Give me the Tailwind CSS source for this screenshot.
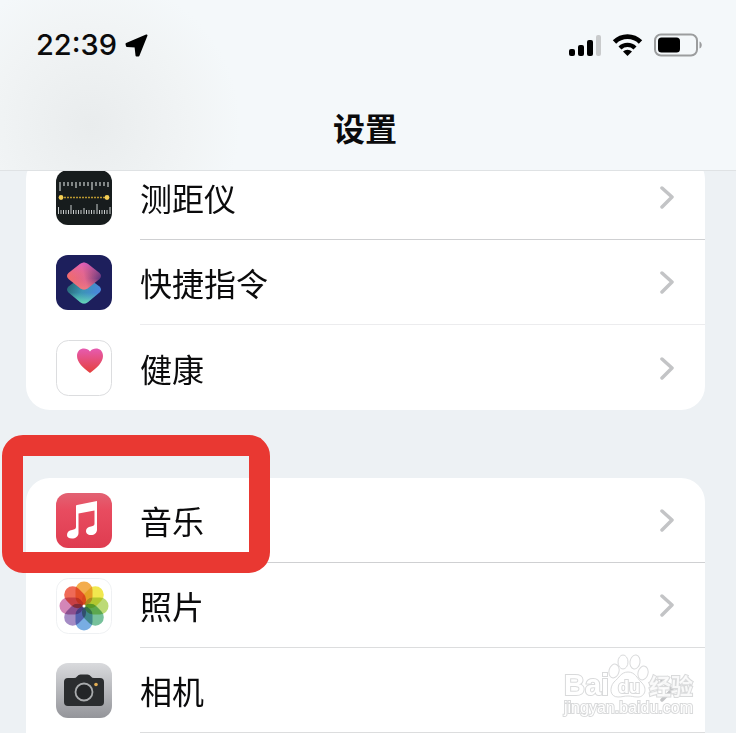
<!DOCTYPE html>
<html lang="zh-CN">
<head>
  <meta charset="UTF-8" />
  <meta name="viewport" content="width=device-width, initial-scale=1.0"/>
  <title>设置</title>
  <script src="https://cdn.jsdelivr.net/npm/@tailwindcss/browser@4"></script>
</head>

<body class="relative bg-[#edf1f4] min-h-screen overflow-x-hidden text-[#0b0b0c] font-['Noto_Sans_CJK_SC',sans-serif]">
  <!-- Header -->
  <header class="relative z-10 h-[171px] flex flex-col border-b border-[#dfe2e4] bg-[#f4f8fa] bg-[radial-gradient(circle_at_90px_125px,#e9eced_0px,#edf0f1_50px,#f1f4f5_100px,#f4f8fa_150px)]">
    <!-- Status bar -->
    <div class="h-[90px] flex items-center justify-between pl-9 pr-[34px]">
      <div class="flex items-center gap-2">
        <span class="text-[29px] font-medium font-['Inter',sans-serif]">22:39</span>
        <svg class="w-6 h-6" viewBox="0 0 24 24" fill="#000" stroke="#000" stroke-width="2" stroke-linejoin="round">
          <path d="M21.500 2.500 1.500 11 2 13 10.500 13.500 11.500 22.500 13.500 22.500Z"/>
        </svg>
      </div>
      <div class="flex items-center gap-[11px]">
        <!-- Signal -->
        <svg class="w-8 h-6" viewBox="0 0 32 24">
          <rect x="0" y="16" width="6" height="7" rx="2"/>
          <rect x="9" y="12" width="6" height="11" rx="2"/>
          <rect x="18" y="7" width="6" height="16" rx="2"/>
          <rect x="27" y="2" width="5" height="21" rx="2" fill="#c9cbcc"/>
        </svg>
        <!-- Wi-Fi -->
        <svg class="w-[31px] h-6" viewBox="0 0 31 24">
          <path d="M2.500 9a18.500 18.500 0 0 1 26 0" fill="none" stroke="#000" stroke-width="4.800"/>
          <path d="M8 15a10.700 10.700 0 0 1 15 0" fill="none" stroke="#000" stroke-width="4.300"/>
          <path d="M15.500 23 11 18.500a6.500 6.500 0 0 1 9 0Z"/>
        </svg>
        <!-- Battery -->
        <svg class="w-12 h-6" viewBox="0 0 48 24">
          <rect x="1" y="1.500" width="42" height="21" rx="6" fill="none" stroke="#9b9d9e" stroke-width="2"/>
          <rect x="4" y="4.500" width="22" height="15" rx="3.500"/>
          <path d="M45.500 8.500c3 1 3 6 0 7Z" fill="#9b9d9e"/>
        </svg>
      </div>
    </div>
    <h1 class="h-[74px] flex items-center justify-center pr-[6px] text-[32px] leading-10 font-bold">设置</h1>
  </header>

  <!-- Settings list -->
  <main class="-mt-4 ml-[26px] mr-[31px] space-y-[68px] text-[32px] leading-10">
    <section class="bg-white rounded-3xl">
      <a href="#" class="h-[85px] flex items-stretch gap-7 pl-[30px]">
        <!-- Measure -->
        <svg class="w-14 h-14 shrink-0 self-center" viewBox="0 0 56 56">
          <rect x="0" y="0" width="56" height="55" rx="12" fill="#171c1d"/>
          <path d="M4 12v9M8 12v4M12 12v4M16 12v4M20 12v6M24 12v4M28 12v4M32 12v4M36 12v8M40 12v4M44 12v4M48 12v4M52 12v5" stroke="#c9cdce" stroke-width="1.200"/>
          <path d="M5 27.500H51" stroke="#b99631" stroke-width="1.500" stroke-dasharray="2 1"/>
          <circle cx="5" cy="27.500" r="2.400" fill="#f4ce55"/>
          <circle cx="51" cy="27.500" r="2.400" fill="#f4ce55"/>
          <path d="M2.500 37v7M5 40v4M7.500 40v4M10 40v4M12.500 40v4M15 35v9M17.500 40v4M20 40v4M22.500 40v4M25 40v4M28 38v6M30.500 40v4M33 40v4M35.500 40v4M38 40v4M41 34v10M43.500 40v4M46 40v4M48.500 40v4M51 40v4M54 37v7" stroke="#c9cdce" stroke-width="1"/>
        </svg>
        <div class="flex-1 flex items-center justify-between pr-[30px] border-b border-[#cfd0d2]">
          <span>测距仪</span>
          <svg class="w-4 h-6" viewBox="0 0 16 24" fill="none" stroke="#c3c4c6" stroke-width="3.500" stroke-linecap="round" stroke-linejoin="round"><path d="M3 3 13 12 3 22"/></svg>
        </div>
      </a>
      <a href="#" class="h-[85px] flex items-stretch gap-7 pl-[30px]">
        <!-- Shortcuts -->
        <svg class="w-14 h-14 shrink-0 self-center" viewBox="0 0 56 56">
          <defs>
            <linearGradient id="scTop" x1="0" y1=".6" x2="1" y2=".4">
              <stop offset="0" stop-color="#f36b68"/>
              <stop offset=".5" stop-color="#e0668f"/>
              <stop offset="1" stop-color="#54307f"/>
            </linearGradient>
            <linearGradient id="scPink" x1=".5" y1="0" x2=".5" y2="1">
              <stop offset="0" stop-color="#e45bd2"/>
              <stop offset=".6" stop-color="#f0707a" stop-opacity="0"/>
              <stop offset="1" stop-color="#f3837c"/>
            </linearGradient>
            <linearGradient id="scBottom" x1="0" y1=".2" x2="1" y2=".6">
              <stop offset="0" stop-color="#24606c"/>
              <stop offset=".5" stop-color="#3c94b4"/>
              <stop offset="1" stop-color="#4b86e4"/>
            </linearGradient>
            <linearGradient id="scGreen" x1=".5" y1=".6" x2=".5" y2="1">
              <stop offset="0" stop-color="#5bd0b0" stop-opacity="0"/>
              <stop offset="1" stop-color="#68d8b4"/>
            </linearGradient>
          </defs>
          <rect x="0" y="0" width="56" height="55" rx="12" fill="#1d1f5c"/>
          <path d="M24.500 22.500Q28 20.500 31.500 22.500L43.500 31.500Q46.500 34.500 43.500 37.500L32 47Q28 50 24 47L12.500 37.500Q9.500 34.500 12.500 31.500Z" fill="url(#scBottom)"/>
          <path d="M24.500 22.500Q28 20.500 31.500 22.500L43.500 31.500Q46.500 34.500 43.500 37.500L32 47Q28 50 24 47L12.500 37.500Q9.500 34.500 12.500 31.500Z" fill="url(#scGreen)"/>
          <path d="M24 9Q28 6 32 9L43.500 18Q46.500 21 43.500 24L31.500 33.500Q28 35.500 24.500 33.500L12.500 24Q9.500 21 12.500 18Z" fill="url(#scTop)"/>
          <path d="M24 9Q28 6 32 9L43.500 18Q46.500 21 43.500 24L31.500 33.500Q28 35.500 24.500 33.500L12.500 24Q9.500 21 12.500 18Z" fill="url(#scPink)" opacity=".7"/>
        </svg>
        <div class="flex-1 flex items-center justify-between pr-[30px] border-b border-[#ececee]">
          <span>快捷指令</span>
          <svg class="w-4 h-6" viewBox="0 0 16 24" fill="none" stroke="#c3c4c6" stroke-width="3.500" stroke-linecap="round" stroke-linejoin="round"><path d="M3 3 13 12 3 22"/></svg>
        </div>
      </a>
      <a href="#" class="h-[85px] flex items-stretch gap-7 pl-[30px]">
        <!-- Health -->
        <svg class="w-14 h-14 shrink-0 self-center" viewBox="0 0 56 56">
          <defs>
            <linearGradient id="heart" x1="0" y1="0" x2="0" y2="1">
              <stop offset="0" stop-color="#e65bb0"/>
              <stop offset="1" stop-color="#e5403c"/>
            </linearGradient>
          </defs>
          <rect x=".5" y=".5" width="55" height="55" rx="12" fill="#fff" stroke="#dcdddf"/>
          <path d="M34 33C27 28 21 22 21 16C21 8 30 6.500 34 11.500C38 6.500 47 8 47 16C47 22 41 28 34 33Z" fill="url(#heart)"/>
        </svg>
        <div class="flex-1 flex items-center justify-between pr-[30px]">
          <span>健康</span>
          <svg class="w-4 h-6" viewBox="0 0 16 24" fill="none" stroke="#c3c4c6" stroke-width="3.500" stroke-linecap="round" stroke-linejoin="round"><path d="M3 3 13 12 3 22"/></svg>
        </div>
      </a>
    </section>

    <section class="relative bg-white rounded-t-3xl">
      <a href="#" class="h-[85px] flex items-stretch gap-7 pl-[30px]">
        <!-- Music -->
        <svg class="w-14 h-14 shrink-0 self-center" viewBox="0 0 56 56">
          <defs>
            <linearGradient id="music" x1="0" y1="0" x2="0" y2="1">
              <stop offset="0" stop-color="#e26273"/>
              <stop offset=".3" stop-color="#e84c60"/>
              <stop offset="1" stop-color="#df3c50"/>
            </linearGradient>
          </defs>
          <rect x="0" y="0" width="56" height="55" rx="12" fill="url(#music)"/>
          <path d="M21 12 41 8V36.500C41 40 38.500 42 35 42C31.500 42 30 40 30 38C30 35.500 32 34 35 33.500C37.500 33 38.500 32.500 38.500 30.500V17.500L22.500 20.500V40C22.500 43.500 19.500 45.500 16 45.500C12.500 45.500 11 44 11 42C11 39 13 37.500 16 37C18.500 36.500 20 36 20 34V13Q20 12.200 21 12Z" fill="#fff"/>
        </svg>
        <div class="flex-1 flex items-center justify-between pr-[30px] border-b border-[#cfd0d2]">
          <span>音乐</span>
          <svg class="w-4 h-6" viewBox="0 0 16 24" fill="none" stroke="#c3c4c6" stroke-width="3.500" stroke-linecap="round" stroke-linejoin="round"><path d="M3 3 13 12 3 22"/></svg>
        </div>
      </a>
      <a href="#" class="h-[85px] flex items-stretch gap-7 pl-[30px]">
        <!-- Photos -->
        <svg class="w-14 h-14 shrink-0 self-center" viewBox="0 0 56 56">
          <rect x=".5" y=".5" width="55" height="55" rx="12" fill="#fff" stroke="#eff1f3"/>
          <g class="isolate [&>rect]:mix-blend-multiply" opacity=".9">
            <rect x="19.500" y="3.500" width="17" height="24" rx="8.500" fill="#f2a53a"/>
            <rect x="19.500" y="3.500" width="17" height="24" rx="8.500" fill="#f0e63c" transform="rotate(45 28 28)"/>
            <rect x="19.500" y="3.500" width="17" height="24" rx="8.500" fill="#b5d768" transform="rotate(90 28 28)"/>
            <rect x="19.500" y="3.500" width="17" height="24" rx="8.500" fill="#69bb91" transform="rotate(135 28 28)"/>
            <rect x="19.500" y="3.500" width="17" height="24" rx="8.500" fill="#6aa5e0" transform="rotate(180 28 28)"/>
            <rect x="19.500" y="3.500" width="17" height="24" rx="8.500" fill="#9b7fbe" transform="rotate(225 28 28)"/>
            <rect x="19.500" y="3.500" width="17" height="24" rx="8.500" fill="#cf7ab0" transform="rotate(270 28 28)"/>
            <rect x="19.500" y="3.500" width="17" height="24" rx="8.500" fill="#ee5a45" transform="rotate(315 28 28)"/>
          </g>
          <circle cx="28" cy="28" r="1.500" fill="#fff"/>
        </svg>
        <div class="flex-1 flex items-center justify-between pr-[30px] border-b border-[#dcddde]">
          <span>照片</span>
          <svg class="w-4 h-6" viewBox="0 0 16 24" fill="none" stroke="#c3c4c6" stroke-width="3.500" stroke-linecap="round" stroke-linejoin="round"><path d="M3 3 13 12 3 22"/></svg>
        </div>
      </a>
      <a href="#" class="h-[85px] flex items-stretch gap-7 pl-[30px]">
        <!-- Camera -->
        <svg class="w-14 h-14 shrink-0 self-center" viewBox="0 0 56 56">
          <defs>
            <linearGradient id="camera" x1="0" y1="0" x2="0" y2="1">
              <stop offset="0" stop-color="#d9dadd"/>
              <stop offset="1" stop-color="#94959a"/>
            </linearGradient>
          </defs>
          <rect x="0" y="0" width="56" height="55" rx="12" fill="url(#camera)"/>
          <path d="M12 15H18Q20 15 21 13.500Q22.500 11.500 24.500 11.500H31.500Q33.500 11.500 35 13.500Q36 15 38 15H44Q48 15 48 19V39Q48 43 44 43H12Q8 43 8 39V19Q8 15 12 15Z" fill="#2b2d2f"/>
          <circle cx="28" cy="29" r="8.500" fill="#232527" stroke="#a9abad" stroke-width="1.800"/>
          <circle cx="40" cy="21.500" r="1.800" fill="#e2ad54"/>
        </svg>
        <div class="flex-1 flex items-center justify-between pr-[30px] border-b border-[#dcddde]">
          <span>相机</span>
          <svg class="w-4 h-6" viewBox="0 0 16 24" fill="none" stroke="#c3c4c6" stroke-width="3.500" stroke-linecap="round" stroke-linejoin="round"><path d="M3 3 13 12 3 22"/></svg>
        </div>
      </a>

      <!-- Highlight frame -->
      <div class="absolute -left-6 -top-[43px] w-[268px] h-[138px] border-[21px] border-[#e93832] rounded-[21px] pointer-events-none"></div>

      <!-- Watermark -->
      <svg class="absolute right-2 bottom-2 w-[136px] h-[72px] pointer-events-none" viewBox="0 0 136 72" fill="#fff" stroke="#d9dadb" stroke-width="1">
        <text x="3" y="42" font-size="29" font-weight="700" font-family="Liberation Sans, sans-serif" paint-order="stroke" stroke-width="2">Bai</text>
        <ellipse cx="53" cy="18" rx="5" ry="7" transform="rotate(15 53 18)"/>
        <ellipse cx="62" cy="9" rx="5" ry="7"/>
        <ellipse cx="74" cy="9" rx="5" ry="7" transform="rotate(10 74 9)"/>
        <ellipse cx="82" cy="20" rx="5" ry="7" transform="rotate(15 82 20)"/>
        <path d="M67 19C74 19 76 25 80 29C87 35 84 44 77 44C72 44 71 43 67 43C63 43 61 44 57 44C49 44 48 35 53 29C58 25 60 19 67 19Z"/>
        <text x="57" y="40" font-size="18" font-weight="700" font-family="Liberation Sans, sans-serif" paint-order="stroke" stroke-width="2">du</text>
        <text x="88" y="41" font-size="22" font-weight="700" font-family="Noto Sans CJK SC, sans-serif" paint-order="stroke" stroke-width="2" fill-opacity=".8">经验</text>
        <text x="3" y="60" font-size="16" font-family="Liberation Sans, sans-serif" paint-order="stroke" stroke-width="2">jingyan.baidu.com</text>
      </svg>
    </section>
  </main>
</body>
</html>
